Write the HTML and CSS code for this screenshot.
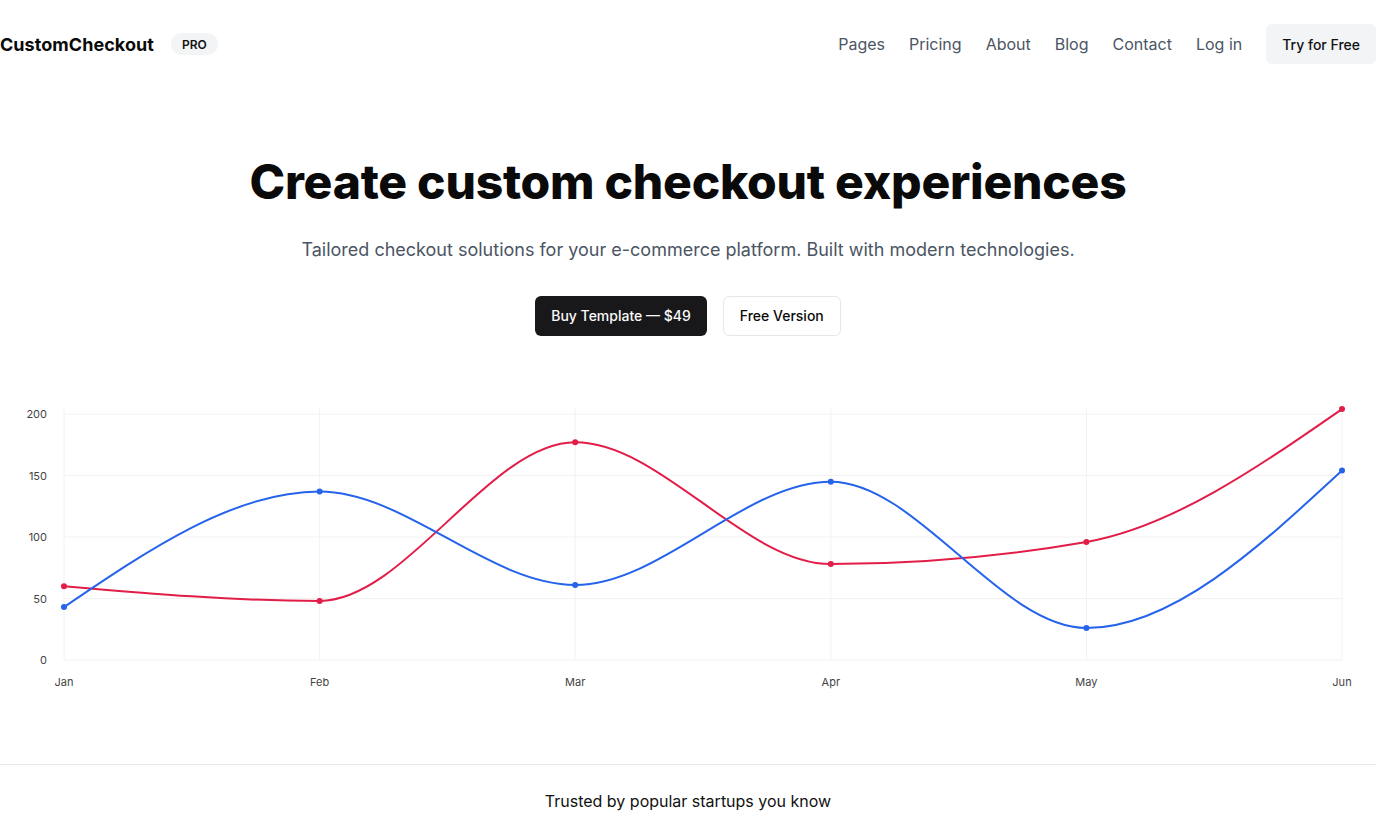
FILE: index.html
```html
<!DOCTYPE html>
<html lang="en">
<head>
<meta charset="utf-8">
<title>CustomCheckout</title>
<link rel="stylesheet" href="styles.css">
</head>
<body>
<header class="topbar">
  <div class="brand">
    <span class="brand-name">CustomCheckout</span>
    <span class="badge">PRO</span>
  </div>
  <nav class="nav">
    <a href="#">Pages</a>
    <a href="#">Pricing</a>
    <a href="#">About</a>
    <a href="#">Blog</a>
    <a href="#">Contact</a>
    <a href="#">Log in</a>
    <a href="#" class="btn-try">Try for Free</a>
  </nav>
</header>

<main>
  <section class="hero">
    <h1>Create custom checkout experiences</h1>
    <p class="lead">Tailored checkout solutions for your e-commerce platform. Built with modern technologies.</p>
    <div class="actions">
      <a href="#" class="btn btn-dark">Buy Template — $49</a>
      <a href="#" class="btn btn-light">Free Version</a>
    </div>
  </section>

  <section class="chart">
    <svg class="chart-svg" width="1376" height="310" viewBox="0 390 1376 310" xmlns="http://www.w3.org/2000/svg">
      <g class="grid">
        <line x1="64" y1="414" x2="1342" y2="414"/>
        <line x1="64" y1="475.5" x2="1342" y2="475.5"/>
        <line x1="64" y1="537" x2="1342" y2="537"/>
        <line x1="64" y1="598.5" x2="1342" y2="598.5"/>
        <line x1="64" y1="660" x2="1342" y2="660"/>
        <line x1="64" y1="408" x2="64" y2="660"/>
        <line x1="319.6" y1="408" x2="319.6" y2="660"/>
        <line x1="575.2" y1="408" x2="575.2" y2="660"/>
        <line x1="830.8" y1="408" x2="830.8" y2="660"/>
        <line x1="1086.4" y1="408" x2="1086.4" y2="660"/>
        <line x1="1342" y1="408" x2="1342" y2="660"/>
      </g>
      <g class="ylabels">
        <text x="47" y="418">200</text>
        <text x="47" y="479.5">150</text>
        <text x="47" y="541">100</text>
        <text x="47" y="602.5">50</text>
        <text x="47" y="664">0</text>
      </g>
      <g class="xlabels">
        <text x="64" y="686">Jan</text>
        <text x="319.6" y="686">Feb</text>
        <text x="575.2" y="686">Mar</text>
        <text x="830.8" y="686">Apr</text>
        <text x="1086.4" y="686">May</text>
        <text x="1342" y="686">Jun</text>
      </g>
      <path class="line-red" d="M64,586.2 C149.2,593.58 234.4,600.96 319.6,600.96 C404.8,600.96 490,442.29 575.2,442.29 C660.4,442.29 745.6,564.06 830.8,564.06 C916,564.06 1001.2,556.68 1086.4,541.92 C1171.6,527.16 1256.8,468.12 1342,409.08"/>
      <path class="line-blue" d="M64,607.11 C149.2,549.3 234.4,491.49 319.6,491.49 C404.8,491.49 490,584.97 575.2,584.97 C660.4,584.97 745.6,481.65 830.8,481.65 C916,481.65 1001.2,628.02 1086.4,628.02 C1171.6,628.02 1256.8,549.3 1342,470.58"/>
      <g class="dots-red">
        <circle cx="64" cy="586.2" r="3"/>
        <circle cx="319.6" cy="600.96" r="3"/>
        <circle cx="575.2" cy="442.29" r="3"/>
        <circle cx="830.8" cy="564.06" r="3"/>
        <circle cx="1086.4" cy="541.92" r="3"/>
        <circle cx="1342" cy="409.08" r="3"/>
      </g>
      <g class="dots-blue">
        <circle cx="64" cy="607.11" r="3"/>
        <circle cx="319.6" cy="491.49" r="3"/>
        <circle cx="575.2" cy="584.97" r="3"/>
        <circle cx="830.8" cy="481.65" r="3"/>
        <circle cx="1086.4" cy="628.02" r="3"/>
        <circle cx="1342" cy="470.58" r="3"/>
      </g>
    </svg>
  </section>

  <section class="trusted">
    <p>Trusted by popular startups you know</p>
  </section>
</main>
</body>
</html>
```

FILE: styles.css
```css
* { box-sizing: border-box; }

html, body {
  margin: 0;
  padding: 0;
  background: #ffffff;
  font-family: Inter, "Noto Sans", "Liberation Sans", sans-serif;
  color: #0a0a0a;
}

a { text-decoration: none; color: inherit; }

.topbar {
  height: 88px;
  display: flex;
  align-items: center;
  justify-content: space-between;
}

.brand {
  display: flex;
  align-items: center;
  gap: 17px;
}

.brand-name {
  font-size: 18px;
  font-weight: 700;
  letter-spacing: 0.05px;
  color: #0a0a0a;
}

.badge {
  display: inline-flex;
  align-items: center;
  height: 22px;
  padding: 0 11px;
  border-radius: 11px;
  background: #f3f4f6;
  font-size: 12px;
  font-weight: 600;
  color: #111;
}

.nav {
  display: flex;
  align-items: center;
  gap: 24px;
}

.nav a {
  font-size: 16px;
  color: #4b5563;
}

.nav a.btn-try {
  height: 40px;
  display: inline-flex;
  align-items: center;
  padding: 0 16px;
  border-radius: 6px;
  background: #f3f4f6;
  color: #111;
  font-size: 14px;
  font-weight: 500;
}

.hero {
  display: flex;
  flex-direction: column;
  align-items: center;
  text-align: center;
}

.hero h1 {
  margin: 70px 0 0;
  font-size: 48px;
  line-height: 48px;
  font-weight: 800;
  letter-spacing: -0.25px;
  color: #0a0a0a;
}

.lead {
  margin: 30px 0 0;
  font-size: 18px;
  line-height: 28px;
  color: #4b5563;
}

.actions {
  margin-top: 32px;
  display: flex;
  gap: 16px;
}

.btn {
  height: 40px;
  display: inline-flex;
  align-items: center;
  padding: 0 16px;
  border-radius: 6px;
  font-size: 14px;
  font-weight: 500;
  line-height: 20px;
}

.btn-dark {
  background: #18181b;
  color: #fafafa;
}

.btn-light {
  background: #fff;
  color: #0a0a0a;
  border: 1px solid #e5e7eb;
}

.chart {
  margin-top: 54px;
}

.chart-svg {
  display: block;
}

.grid line {
  stroke: #f2f2f2;
  stroke-width: 1;
}

.ylabels text {
  font-size: 11px;
  fill: #444;
  text-anchor: end;
}

.xlabels text {
  font-size: 11px;
  fill: #444;
  text-anchor: middle;
}

.line-red, .line-blue {
  fill: none;
  stroke-width: 2;
}

.line-red { stroke: #e11d48; }
.line-blue { stroke: #2563eb; }

.dots-red circle { fill: #e11d48; }
.dots-blue circle { fill: #2563eb; }

.trusted {
  margin-top: 64px;
  border-top: 1px solid #e5e7eb;
  text-align: center;
}

.trusted p {
  margin: 24px 0 0;
  font-size: 16px;
  line-height: 24px;
  color: #111;
}
```
